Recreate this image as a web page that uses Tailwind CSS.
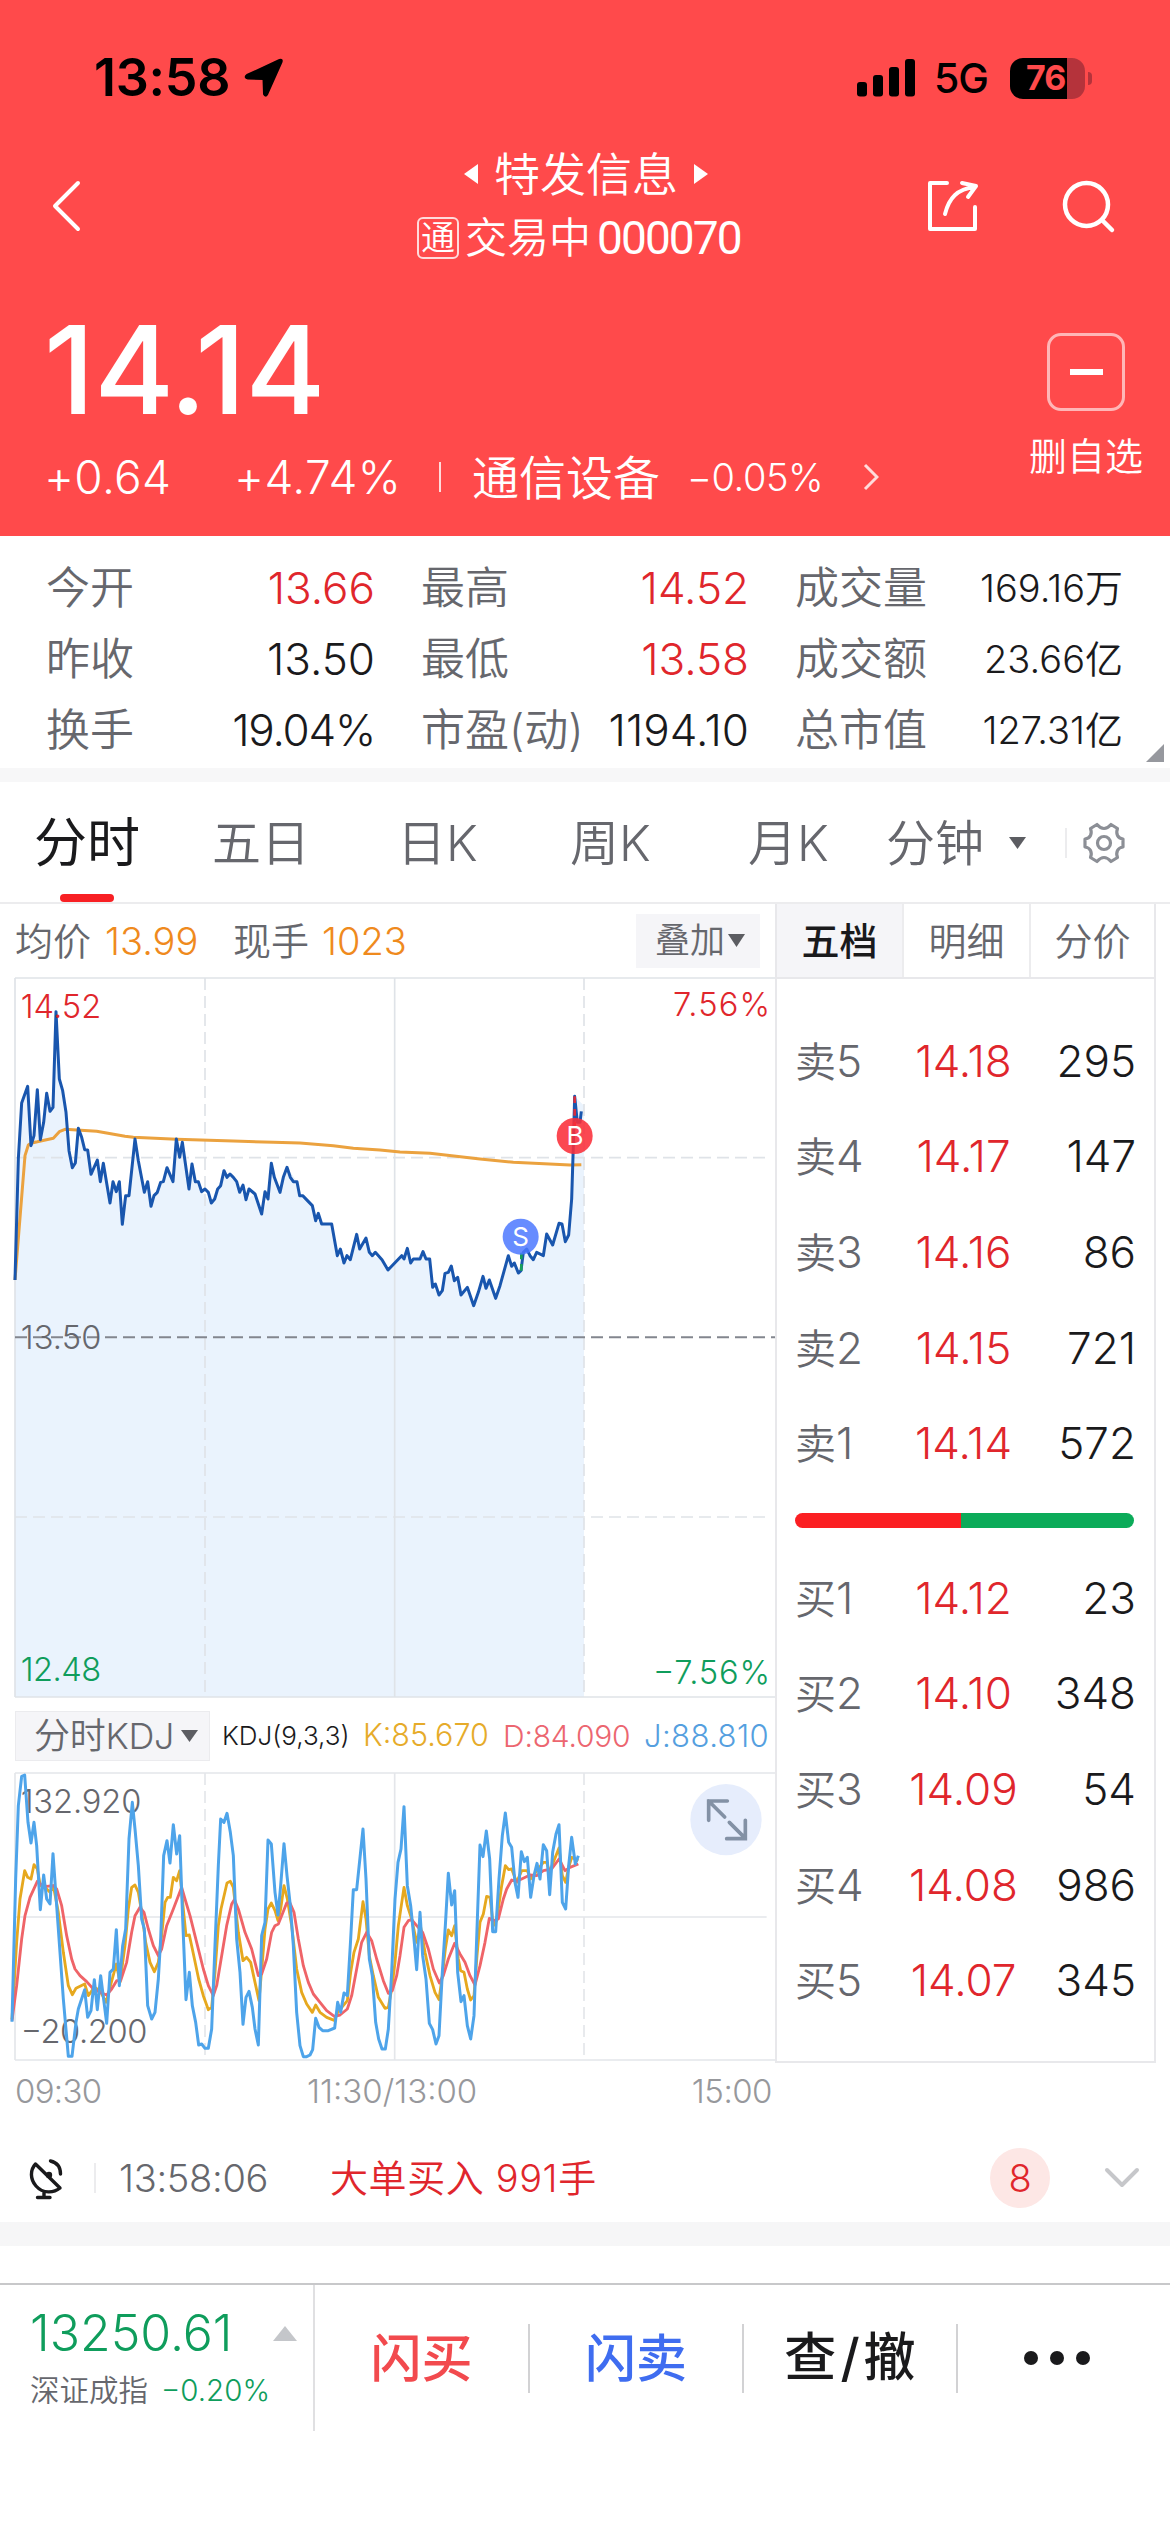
<!DOCTYPE html>
<html lang="zh-Hans">
<head>
  <meta charset="UTF-8">
  <meta name="viewport" content="width=device-width, initial-scale=1.0">
  <title>特发信息 000070</title>
  <script src="https://cdn.jsdelivr.net/npm/@tailwindcss/browser@4"></script>
</head>
<body class="w-[1170px] h-[2532px] overflow-hidden bg-white text-[#1a1a1c] font-['Inter','Noto_Sans_CJK_SC',sans-serif] font-[350] leading-none whitespace-nowrap">

  <!-- 顶部行情 -->
  <header class="h-[536px] bg-[#ff4a4b] text-white flex flex-col">
    <!-- 状态栏 -->
    <div class="h-[156px] flex items-center pl-[94px] pr-[78px] text-black">
      <span class="text-[52px] font-semibold w-[149px] tracking-[-.3px]">13:58</span>
      <svg class="w-10 h-10" viewBox="0 0 40 40"><path d="M36.500 2Q39.500 1 38.500 4L24 36.500Q22.500 39 21 36L20.500 21L5 20.500Q1 19.500 4 17Z" fill="#000" stroke="#000" stroke-width="2" stroke-linejoin="round"/></svg>
      <div class="ml-auto flex items-center">
        <svg class="w-[58px] h-[38px]" viewBox="0 0 58 38">
          <rect x="0" y="23" width="10" height="14.500" rx="3"/><rect x="16" y="16" width="10" height="21.500" rx="3"/>
          <rect x="32" y="8" width="10" height="29.500" rx="3"/><rect x="48" y="0" width="10" height="37.500" rx="3"/>
        </svg>
        <span class="text-[41px] font-medium ml-[19px] w-[56px] tracking-[-1px]">5G</span>
        <div class="ml-[20px] w-[75px] h-[41px] rounded-[13px] overflow-hidden bg-[linear-gradient(90deg,#000_57px,#b5333b_57px)] text-[#ff4a4b] text-[34px] font-bold flex items-center pl-[16px] tracking-[-1px]">76</div>
        <div class="ml-[3px] w-[4px] h-[13px] rounded-r-full bg-[#b5333b]"></div>
      </div>
    </div>

    <!-- 标题栏 -->
    <div class="h-[120px] flex items-start">
      <svg class="w-[32px] h-[56px] ml-[50px] mt-[22px]" viewBox="0 0 32 56" fill="none" stroke="#fff" stroke-width="4" stroke-linecap="round" stroke-linejoin="round"><path d="M28 5L5 28L28 51"/></svg>
      <div class="ml-[335px] w-[326px] flex flex-col items-center">
        <div class="h-[36px] flex items-center gap-[16px] mr-[-12px]">
          <svg class="w-[14px] h-[20px]" viewBox="0 0 14 20"><path d="M14 0V20L0 10Z" fill="#fff"/></svg>
          <span class="text-[46px]">特发信息</span>
          <svg class="w-[14px] h-[20px]" viewBox="0 0 14 20"><path d="M0 0V20L14 10Z" fill="#fff"/></svg>
        </div>
        <div class="mt-[23px] h-[46px] w-full flex items-center">
          <span class="w-[42px] h-[42px] border-2 border-white/80 rounded-[6px] text-[34px] flex items-center justify-center">通</span>
          <span class="text-[42px] ml-[6px] w-[132px]">交易中</span>
          <span class="text-[46px] font-['Roboto'] font-normal tracking-[-1.900px]">000070</span>
        </div>
      </div>
      <svg class="w-[56px] h-[56px] ml-[182px] mt-[22px]" viewBox="0 0 56 56" fill="none" stroke="#fff" stroke-width="4" stroke-linecap="round" stroke-linejoin="round">
        <path d="M22 5H5V51H50V29"/><path d="M20 36C24 20 32 11 50 9M37 5L51 8L43 19"/>
      </svg>
      <svg class="w-[56px] h-[56px] ml-[80px] mt-[22px]" viewBox="0 0 56 56" fill="none" stroke="#fff" stroke-width="4.500" stroke-linecap="round">
        <circle cx="25.500" cy="26.500" r="21.500"/><path d="M41 42L51 52"/>
      </svg>
    </div>

    <div class="flex flex-1">
      <div class="pl-[44px] flex-1">
        <div class="mt-[34px] h-[120px] flex items-center text-[122px] font-medium tracking-[-.5px]">14.14</div>
        <div class="mt-[22px] h-[50px] flex items-center">
          <span class="text-[46px] w-[190px] tracking-[.3px]">+0.64</span>
          <span class="text-[46px] w-[205px] tracking-[.4px]">+4.74%</span>
          <span class="w-[2px] h-[30px] bg-white/80"></span>
          <span class="text-[47px] ml-[31px] w-[215px]">通信设备</span>
          <span class="text-[38px] w-[176px] tracking-[-.4px]">−0.05%</span>
          <svg class="w-[16px] h-[28px]" viewBox="0 0 16 28" fill="none" stroke="#fff" stroke-opacity=".8" stroke-width="3"><path d="M2 2L14 14L2 26"/></svg>
        </div>
      </div>
      <div class="w-[168px] flex flex-col items-center">
        <div class="mt-[57px] w-[78px] h-[78px] border-[3px] border-white/60 rounded-[14px] flex items-center justify-center">
          <span class="w-[33px] h-[6px] bg-white"></span>
        </div>
        <span class="mt-[26px] text-[38px]">删自选</span>
      </div>
    </div>
  </header>

  <!-- 今日数据 -->
  <section class="relative h-[232px] pt-[16px] grid grid-cols-[329px_328px_328px] auto-rows-[71px] gap-x-[46px] pl-[46px] text-[44px] text-[#66676d]">
    <div class="flex items-center justify-between"><span>今开</span><span class="text-[#e0262c]">13.66</span></div>
    <div class="flex items-center justify-between"><span>最高</span><span class="text-[#e0262c]">14.52</span></div>
    <div class="flex items-center justify-between"><span>成交量</span><span class="text-[#1a1a1c] text-[38px]">169.16万</span></div>
    <div class="flex items-center justify-between"><span>昨收</span><span class="text-[#1a1a1c]">13.50</span></div>
    <div class="flex items-center justify-between"><span>最低</span><span class="text-[#e0262c]">13.58</span></div>
    <div class="flex items-center justify-between"><span>成交额</span><span class="text-[#1a1a1c] text-[38px]">23.66亿</span></div>
    <div class="flex items-center justify-between"><span>换手</span><span class="text-[#1a1a1c] tracking-[-1.200px]">19.04%</span></div>
    <div class="flex items-center justify-between"><span>市盈(动)</span><span class="text-[#1a1a1c]">1194.10</span></div>
    <div class="flex items-center justify-between"><span>总市值</span><span class="text-[#1a1a1c] text-[38px]">127.31亿</span></div>
    <svg class="absolute right-[6px] bottom-[6px] w-[18px] h-[18px]" viewBox="0 0 18 18"><path d="M18 0V18H0Z" fill="#96989e"/></svg>
  </section>
  <div class="h-[14px] bg-[#f7f7f8]"></div>

  <!-- 周期切换 -->
  <nav class="h-[122px] border-b-2 border-[#ececee] flex text-[49px] text-[#66676d]">
    <div class="w-[174px] flex flex-col items-center text-[53px] text-[#1a1a1c]">
      <span class="mt-[35px] font-normal">分时</span>
      <span class="mt-[24px] w-[54px] h-[9px] rounded-full bg-[#f82024]"></span>
    </div>
    <div class="h-[122px] flex items-center">
      <span class="ml-[38px] w-[185px]">五日</span>
      <span class="w-[173px]">日K</span>
      <span class="w-[178px]">周K</span>
      <span class="w-[138px]">月K</span>
      <span class="w-[123px]">分钟</span>
      <svg class="w-[17px] h-[12px]" viewBox="0 0 17 12"><path d="M0 0H17L8.500 12Z" fill="#5c5d62"/></svg>
      <span class="ml-[39px] w-[2px] h-[30px] bg-[#ececee]"></span>
      <svg class="ml-[15px] w-[44px] h-[44px]" viewBox="0 0 44 44" fill="none" stroke="#8c8f96" stroke-width="3.200" stroke-linejoin="round">
        <circle cx="22" cy="22" r="6.500"/>
        <path d="M15 3.500Q18.500 7.500 22 7.500Q25.500 7.500 29 3.500L35.500 7.500Q34 11.500 35.500 14.500Q37 17.500 41 18V26Q37 26.500 35.500 29.500Q34 32.500 35.500 36.500L29 40.500Q25.500 36.500 22 36.500Q18.500 36.500 15 40.500L8.500 36.500Q10 32.500 8.500 29.500Q7 26.500 3 26V18Q7 17.500 8.500 14.500Q10 11.500 8.500 7.500Z"/>
      </svg>
    </div>
  </nav>

  <main class="flex h-[1212px]">
    <!-- 左：分时图 -->
    <div class="w-[775px]">
      <div class="h-[73px] pl-[15px] pr-[15px] flex items-center text-[38px] text-[#66676d]">
        <span class="w-[90px]">均价</span>
        <span class="w-[128px] text-[#ef8a1d]">13.99</span>
        <span class="w-[89px]">现手</span>
        <span class="text-[#ef8a1d]">1023</span>
        <span class="ml-auto w-[124px] h-[54px] bg-[#f5f5f8] text-[35px] flex items-center pl-[19px] gap-[3px]">叠加
          <svg class="w-[17px] h-[13px]" viewBox="0 0 17 13"><path d="M0 0H17L8.500 13Z" fill="#5c5d62"/></svg>
        </span>
      </div>

      <svg class="block w-[775px] h-[722px]" viewBox="0 54 2325 2166" font-size="98">
        <path fill="#eaf3fd" d="M45 963L55 600L65 432L83 382L93 560L102 530L112 392L121 542L131 490L140 403L150 457L159 445L168 158L178 360L188 395L198 460L207 575L217 626L226 612L235 508L245 535L254 572L263 573L273 646L292 603L301 668L310 613L330 732L339 668L349 698L358 668L367 796L377 710L387 710L405 540L415 605L433 700L443 668L453 742L462 710L482 670L490 668L501 626L519 668L529 540L539 595L547 550L567 690L576 615L586 668L605 698L634 732L653 690L672 635L710 668L738 722L765 705L785 765L804 720L814 613L840 700L861 625L891 668L899 710L937 740L947 785L995 795L1012 890L1032 912L1051 902L1070 826L1079 870L1098 837L1117 890L1146 902L1164 933L1205 890L1222 868L1232 912L1269 878L1289 900L1298 985L1317 1008L1335 943L1354 921L1383 1008L1402 985L1421 1040L1449 952L1468 963L1487 1018L1525 890L1555 942L1570 880L1600 902L1630 890L1640 825L1658 858L1677 793L1696 848L1706 828L1715 720L1724 412L1752 440V2214H45Z"/>
        <g fill="none" stroke="#dfe3e8" stroke-width="5">
          <path d="M45 57H2325M45 2214H2325M45 57V2214M1184 57V2214"/>
          <path d="M615 57V2214M1752 57V2214M45 596H2300M45 1674H2300" stroke-dasharray="36 18"/>
        </g>
        <path d="M45 1135H2325" stroke="#83868e" stroke-width="6" stroke-dasharray="36 18"/>
        <path fill="none" stroke="#eba23f" stroke-width="9" stroke-linejoin="round" d="M45 963L75 590L85 558Q90 552 112 548L160 538L178 518L195 511L290 517L375 532L400 535L530 541L700 546L820 550L900 552L1000 560L1060 568L1140 573L1200 579L1290 583L1440 600L1540 610L1710 618L1744 617"/>
        <polyline fill="none" stroke="#1956ae" stroke-width="9" stroke-linejoin="round" points="45,963 55,600 65,432 83,382 93,560 102,530 112,392 121,542 131,490 140,403 150,457 159,445 168,158 178,360 188,395 198,460 207,575 217,626 226,612 235,508 245,535 254,572 263,573 273,646 292,603 301,668 310,613 330,732 339,668 349,698 358,668 367,796 377,710 387,710 405,540 415,605 433,700 443,668 453,742 462,710 472,700 482,670 490,668 501,626 519,668 529,540 539,595 547,550 567,690 576,615 586,668 595,668 605,698 615,690 625,700 634,732 644,720 653,690 662,680 672,635 681,655 690,645 700,655 710,668 719,700 729,678 738,722 747,690 765,705 785,765 795,698 804,720 814,613 823,655 840,700 850,655 861,625 871,655 880,668 891,668 899,710 908,710 937,740 947,785 955,763 965,795 995,795 1012,890 1021,870 1032,912 1041,890 1051,902 1070,826 1079,870 1098,837 1108,880 1117,890 1126,880 1146,902 1164,933 1205,890 1212,900 1222,868 1232,912 1240,900 1260,900 1269,878 1278,900 1289,900 1298,985 1306,975 1317,1008 1327,995 1335,943 1345,940 1354,921 1363,965 1373,955 1383,1008 1402,985 1421,1040 1435,1000 1449,952 1458,988 1468,963 1487,1018 1500,980 1525,890 1535,922 1543,912 1555,942 1563,935 1570,880 1580,870 1590,890 1600,902 1610,880 1630,890 1640,825 1658,858 1677,793 1686,795 1696,848 1706,828 1715,720 1720,560 1724,412 1732,490 1740,490 1744,457"/>
        <!-- 买卖点 -->
        <path d="M1724 412V500" stroke="#d52c3c" stroke-width="8" stroke-dasharray="20 18"/>
        <path d="M1564 935V880" stroke="#17a05a" stroke-width="8" stroke-dasharray="20 14"/>
        <circle cx="1562" cy="833" r="54" fill="#4c78ff" fill-opacity=".85"/>
        <circle cx="1724" cy="531" r="54" fill="#fb2f39" fill-opacity=".88"/>
        <g fill="#fff" font-size="78" font-weight="400" text-anchor="middle"><text x="1562" y="861">S</text><text x="1725" y="559">B</text></g>
        <text x="62" y="178" fill="#e0262c" textLength="242">14.52</text>
        <text x="2019" y="170" fill="#e0262c" textLength="291">7.56%</text>
        <text x="62" y="1171" fill="#66676d" textLength="242">13.50</text>
        <text x="62" y="2166" fill="#0f9d5c" textLength="242">12.48</text>
        <text x="1959" y="2175" fill="#0f9d5c" textLength="351">−7.56%</text>
      </svg>

      <div class="h-[73px] pl-[15px] flex items-center">
        <span class="w-[195px] h-[50px] border border-[#ebebee] bg-[#f5f5f8] text-[36px] text-[#66676d] flex items-center pl-[18px] gap-[7px]"><span class="tracking-[-.3px]">分时KDJ</span>
          <svg class="w-[17px] h-[12px]" viewBox="0 0 17 12"><path d="M0 0H17L8.500 12Z" fill="#5c5d62"/></svg>
        </span>
        <span class="ml-[12px] w-[141px] text-[26px]">KDJ(9,3,3)</span>
        <span class="w-[140px] text-[30.500px] text-[#e6ab2a]">K:85.670</span>
        <span class="w-[141px] text-[30px] tracking-[-.2px] text-[#ec6670]">D:84.090</span>
        <span class="text-[31px] tracking-[.4px] text-[#559fdf]">J:88.810</span>
      </div>

      <svg class="block w-[775px] h-[290px]" viewBox="0 279 2325 870" font-size="98">
        <g fill="none" stroke="#e4e6ea" stroke-width="5">
          <path d="M45 282H2325M45 1143H2325M45 282V1143M1184 282V1143M45 714H2300"/>
          <path d="M615 282V1143M1752 282V1143" stroke-dasharray="36 18"/>
        </g>
        <text x="62" y="403" fill="#66676d" textLength="362">132.920</text>
        <text x="62" y="1093" fill="#66676d" textLength="380">−20.200</text>
        <g fill="none" stroke-width="8.500" stroke-linejoin="round">
          <polyline stroke="#e6a81e" points="36,1020 50,790 60,660 74,575 83,595 93,600 102,557 112,570 121,620 135,625 150,640 160,620 175,700 190,820 205,920 217,947 228,928 254,915 265,950 283,925 300,935 318,970 330,925 349,855 360,910 375,800 385,690 395,625 405,618 415,640 425,700 437,790 450,850 463,878 475,850 485,770 495,670 503,655 511,655 520,595 530,605 539,575 548,670 558,770 568,768 577,810 596,900 610,950 625,992 635,985 645,880 655,740 663,690 681,612 691,607 700,625 715,760 729,845 740,835 752,850 765,910 777,965 787,850 795,750 804,690 814,672 825,695 834,725 842,690 852,620 862,660 875,740 890,870 905,940 920,975 937,1000 947,978 960,1000 980,1015 1003,1024 1013,1000 1042,965 1052,880 1062,820 1075,780 1089,668 1098,720 1108,830 1120,890 1135,955 1155,988 1165,985 1175,930 1185,850 1195,740 1212,625 1222,680 1235,720 1250,790 1262,745 1275,820 1290,890 1305,940 1317,962 1327,890 1336,810 1345,753 1355,770 1364,740 1375,840 1382,875 1392,880 1402,930 1412,963 1422,950 1431,830 1440,730 1450,705 1460,652 1470,655 1480,740 1490,725 1505,620 1516,560 1526,572 1535,570 1550,610 1565,575 1582,575 1592,600 1611,575 1630,550 1640,550 1649,580 1660,550 1677,507 1687,590 1697,610 1706,565 1715,535 1735,545"/>
          <polyline stroke="#ef6468" points="36,1025 50,920 65,780 75,710 90,655 112,607 125,618 140,622 160,620 170,630 185,680 200,770 215,840 225,870 240,890 260,908 280,930 300,940 320,948 335,930 350,905 362,905 380,850 395,760 405,710 420,685 432,700 445,750 460,800 475,830 485,810 500,740 520,690 545,625 555,660 570,710 590,790 610,870 625,920 640,950 650,920 665,830 680,740 695,675 703,662 715,690 735,760 755,810 775,890 785,885 800,840 815,760 825,740 835,735 845,710 860,672 870,672 882,700 895,780 910,860 925,910 940,945 960,970 980,995 1003,1012 1020,1008 1042,990 1055,950 1070,870 1085,790 1100,760 1115,785 1130,840 1150,905 1165,943 1177,935 1190,890 1200,830 1212,745 1225,725 1235,722 1250,740 1268,760 1285,810 1300,870 1318,912 1330,890 1345,840 1364,793 1380,825 1395,850 1410,890 1425,918 1440,860 1455,790 1468,718 1480,725 1495,720 1510,660 1520,630 1535,603 1550,607 1565,600 1590,588 1610,590 1630,575 1655,570 1677,540 1695,575 1710,565 1735,555"/>
          <polyline stroke="#4ea4ea" stroke-width="9" points="36,1028 47,600 55,380 65,292 74,288 84,430 93,492 102,430 110,500 121,692 131,588 140,660 150,675 159,524 170,680 190,960 205,1132 216,1132 228,1030 235,990 254,932 263,1015 273,995 283,902 292,992 302,890 320,1033 330,880 340,870 349,752 358,920 368,800 377,750 387,480 397,370 405,450 415,560 425,720 433,750 443,980 455,1020 465,1000 475,900 482,780 491,530 501,485 510,552 520,437 530,525 539,470 548,720 558,962 568,880 577,980 587,1030 596,1098 605,1095 615,1108 625,1108 635,1050 645,800 655,560 662,420 672,430 681,403 691,460 700,530 710,780 720,880 729,1036 738,955 747,937 757,985 765,1050 775,1098 785,770 795,730 804,483 814,495 825,640 834,708 842,620 852,494 861,590 871,680 880,800 890,1000 900,1100 910,1133 920,1133 930,1128 938,1112 947,1018 957,1045 968,1055 985,1055 1004,1047 1013,970 1022,1000 1032,942 1042,950 1052,780 1060,632 1070,632 1089,450 1098,600 1108,840 1117,890 1127,1030 1136,1080 1146,1110 1156,1110 1165,1050 1175,880 1185,660 1194,550 1203,510 1212,383 1222,620 1232,680 1242,780 1250,872 1260,700 1268,830 1278,900 1288,1033 1298,1052 1308,1095 1317,1070 1327,880 1336,740 1345,583 1355,678 1364,635 1373,880 1383,968 1392,950 1402,1040 1412,1080 1422,1010 1431,750 1440,498 1449,533 1459,456 1469,540 1478,758 1487,758 1497,600 1507,470 1516,402 1526,490 1535,505 1545,610 1554,655 1564,518 1573,548 1582,535 1592,655 1602,590 1611,553 1620,600 1630,497 1640,515 1649,647 1658,520 1668,465 1677,437 1687,670 1697,690 1706,560 1715,475 1726,555 1735,530"/>
        </g>
        <circle cx="2178" cy="422" r="107" fill="#e6edfc"/>
        <path d="M2174 414L2126 366M2126 424V366H2182M2188 430L2236 478M2180 479H2236V424" fill="none" stroke="#8391a5" stroke-width="11" stroke-linecap="round"/>
      </svg>

      <div class="h-[54px] pt-[5px] pl-[15px] pr-[3px] flex items-center text-[33px] text-[#97989c]">
        <span class="w-[292px] tracking-[-.7px]">09:30</span><span>11:30/13:00</span><span class="ml-auto tracking-[-.5px]">15:00</span>
      </div>
    </div>

    <!-- 右：五档盘口 -->
    <aside class="w-[381px] h-[1159px] border-l-2 border-r-2 border-b-2 border-[#e8e8eb] text-[44px]">
      <div class="h-[75px] flex border-b-2 border-[#e8e8eb] text-[38px] text-[#66676d]">
        <span class="w-[125px] bg-[#f5f5f8] text-[#1a1a1c] font-medium flex items-center justify-center">五档</span>
        <span class="w-[127px] border-l-2 border-[#ececee] flex items-center justify-center">明细</span>
        <span class="flex-1 border-l-2 border-[#ececee] flex items-center justify-center">分价</span>
      </div>
      <div class="pt-[34px] pl-[18px] pr-[18px] grid grid-cols-[100px_137px_1fr] auto-rows-[95.600px] items-center">
        <span class="text-[#66676d]"><span class="text-[41px]">卖</span>5</span><span class="text-center text-[#e0262c]">14.18</span><span class="text-right">295</span>
        <span class="text-[#66676d]"><span class="text-[41px]">卖</span>4</span><span class="text-center text-[#e0262c]">14.17</span><span class="text-right">147</span>
        <span class="text-[#66676d]"><span class="text-[41px]">卖</span>3</span><span class="text-center text-[#e0262c]">14.16</span><span class="text-right">86</span>
        <span class="text-[#66676d]"><span class="text-[41px]">卖</span>2</span><span class="text-center text-[#e0262c]">14.15</span><span class="text-right">721</span>
        <span class="text-[#66676d]"><span class="text-[41px]">卖</span>1</span><span class="text-center text-[#e0262c]">14.14</span><span class="text-right">572</span>
      </div>
      <div class="mt-[22px] ml-[18px] w-[339px] h-[15px] rounded-full overflow-hidden flex">
        <span class="w-[166px] bg-[#fb1f22]"></span><span class="flex-1 bg-[#0bab59]"></span>
      </div>
      <div class="pt-[22px] pl-[18px] pr-[18px] grid grid-cols-[100px_137px_1fr] auto-rows-[95.600px] items-center">
        <span class="text-[#66676d]"><span class="text-[41px]">买</span>1</span><span class="text-center text-[#e0262c]">14.12</span><span class="text-right">23</span>
        <span class="text-[#66676d]"><span class="text-[41px]">买</span>2</span><span class="text-center text-[#e0262c]">14.10</span><span class="text-right">348</span>
        <span class="text-[#66676d]"><span class="text-[41px]">买</span>3</span><span class="text-center text-[#e0262c]">14.09</span><span class="text-right">54</span>
        <span class="text-[#66676d]"><span class="text-[41px]">买</span>4</span><span class="text-center text-[#e0262c]">14.08</span><span class="text-right">986</span>
        <span class="text-[#66676d]"><span class="text-[41px]">买</span>5</span><span class="text-center text-[#e0262c]">14.07</span><span class="text-right">345</span>
      </div>
    </aside>
  </main>

  <!-- 盘口异动 -->
  <section class="h-[106px] pt-[18px] flex items-center pl-[27px] pr-[30px] text-[38px]">
    <svg class="w-[40px] h-[44px] mt-[4px]" viewBox="0 0 40 44" fill="none" stroke="#1a1a1c" stroke-width="3.400" stroke-linecap="round" stroke-linejoin="round">
      <path d="M8.500 6L33 30C27 35 16 36 9 28C3 21 3 12 8.500 6ZM17 34V39M10.500 39.500H23M23.500 3C30 4.500 33.500 9.500 33.500 16"/><circle cx="22" cy="17" r="1.500"/>
    </svg>
    <span class="ml-[27px] w-[2px] h-[30px] bg-[#ececee]"></span>
    <span class="ml-[23px] w-[211px] text-[#66676d] tracking-[-.3px]">13:58:06</span>
    <span class="text-[#e0262c] tracking-[.6px]">大单买入 991手</span>
    <span class="ml-auto w-[60px] h-[60px] rounded-full bg-[#fde7e5] text-[#e0262c] flex items-center justify-center">8</span>
    <svg class="ml-[54px] w-[36px] h-[22px]" viewBox="0 0 36 22" fill="none" stroke="#c6c7ca" stroke-width="4" stroke-linecap="round" stroke-linejoin="round"><path d="M3 3L18 18L33 3"/></svg>
  </section>
  <div class="h-[24px] bg-[#f6f6f7]"></div>

  <!-- 底部操作栏 -->
  <footer class="mt-[37px] h-[249px] border-t-2 border-[#c8c8ca] flex items-start text-[51px] font-medium">
    <div class="w-[315px] h-[146px] border-r-2 border-[#e0e0e2] pl-[30px] font-[350]">
      <div class="mt-[21px] h-[54px] flex items-center">
        <span class="w-[243px] text-[50px] text-[#0f9d5c]">13250.61</span>
        <svg class="w-[24px] h-[15px]" viewBox="0 0 24 15"><path d="M0 15H24L12 0Z" fill="#c4c6ca"/></svg>
      </div>
      <div class="mt-[13px] h-[36px] flex items-center text-[29.500px] text-[#66676d]">
        <span class="w-[131px]">深证成指</span><span class="text-[#0f9d5c]">−0.20%</span>
      </div>
    </div>
    <div class="h-[146px] flex-1 flex items-center">
      <span class="w-[213px] text-center text-[#f24a4e]">闪买</span>
      <span class="w-[2px] h-[69px] bg-[#d2d2d4]"></span>
      <span class="w-[212px] text-center text-[#3f6df0]">闪卖</span>
      <span class="w-[2px] h-[69px] bg-[#d2d2d4]"></span>
      <span class="w-[212px] text-center text-[52px]">查<span class="mx-[4px]">/</span>撤</span>
      <span class="w-[2px] h-[69px] bg-[#d2d2d4]"></span>
      <span class="flex-1 flex justify-center gap-[12px] pr-[14px]">
        <i class="w-[14px] h-[14px] rounded-full bg-[#1a1a1c]"></i><i class="w-[14px] h-[14px] rounded-full bg-[#1a1a1c]"></i><i class="w-[14px] h-[14px] rounded-full bg-[#1a1a1c]"></i>
      </span>
    </div>
  </footer>
</body>
</html>
